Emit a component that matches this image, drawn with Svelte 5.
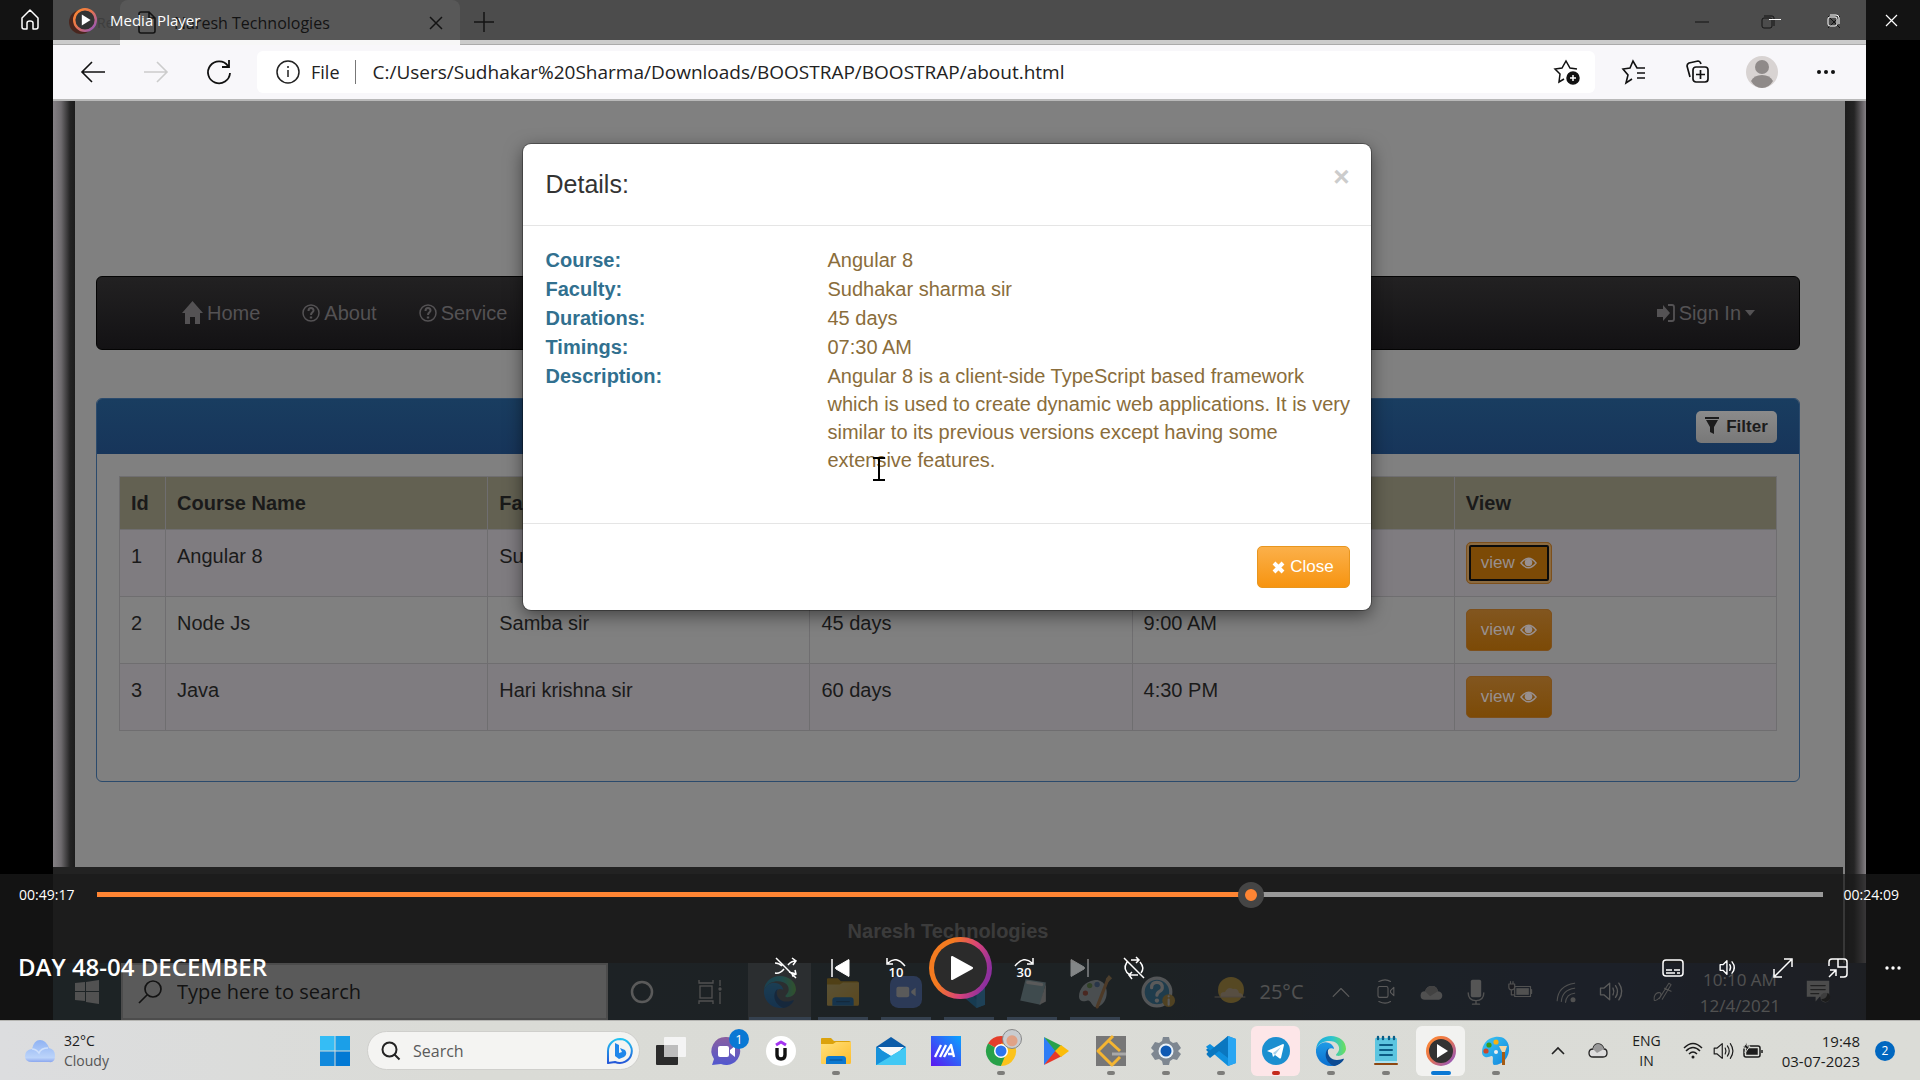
<script>
  const courses = [
    { id: 1, name: 'Angular 8', faculty: 'Sudhakar sharma sir', duration: '45 days', time: '7:30 AM' },
    { id: 2, name: 'Node Js', faculty: 'Samba sir', duration: '45 days', time: '9:00 AM' },
    { id: 3, name: 'Java', faculty: 'Hari krishna sir', duration: '60 days', time: '4:30 PM' }
  ];
  const details = [
    ['Course:', 'Angular 8'],
    ['Faculty:', 'Sudhakar sharma sir'],
    ['Durations:', '45 days'],
    ['Timings:', '07:30 AM'],
    ['Description:', 'Angular 8 is a client-side TypeScript based framework which is used to create dynamic web applications. It is very similar to its previous versions except having some extensive features.']
  ];
  const total = 4406;
  let position = $state(2957);
  // The thumb is 26px wide, so its centre never reaches the ends of the track.
  const played = $derived(`calc(13px + (100% - 26px) * ${position / total})`);

  const videoApps = ['edge', 'explorer', 'zoom', 'vscode', 'notes', 'paint'];
  const videoTray = ['chevron', 'meet', 'cloudFlat', 'mic', 'plug', 'wifiThin', 'volume'];
  const apps = [
    { icon: 'taskview', label: 'Task view' },
    { icon: 'chat', label: 'Chat', badge: 1 },
    { icon: 'udemy', label: 'Udemy' },
    { icon: 'explorer', label: 'File Explorer', open: true },
    { icon: 'mail', label: 'Mail' },
    { icon: 'asus', label: 'MyASUS' },
    { icon: 'chrome', label: 'Chrome', open: true },
    { icon: 'play', label: 'Google Play' },
    { icon: 'leet', label: 'LeetCode', open: true },
    { icon: 'gear', label: 'Settings', open: true },
    { icon: 'vscode', label: 'Visual Studio Code', open: true },
    { icon: 'telegram', label: 'Telegram', open: true, alert: true },
    { icon: 'edge', label: 'Edge', open: true },
    { icon: 'notepad', label: 'Notepad', open: true },
    { icon: 'media', label: 'Media Player', active: true },
    { icon: 'paint11', label: 'Paint', open: true }
  ];
</script>

{#snippet icon(name, size = 30)}
  <svg class="icon" width={size} height={size} viewBox="0 0 30 30" fill="none" stroke-linecap="round" stroke-linejoin="round" aria-hidden="true">
    {#if name === 'edge'}
      <path d="M15 0C7 0 1 5 0 13c3-6 8-8 13-8 8 0 11 5 10 9-1 3-3 4-3 5 1 2 9 1 10-6C30 5 23 0 15 0z" fill="url(#g-edge-top)" />
      <path d="M0 13c3-6 8-8 13-6 3 1 5 4 5 6-3-2-7 0-7 4 0 5 5 9 11 8 3 0 5-1 5-1-3 4-7 6-12 6C6 30-1 22 0 13z" fill="url(#g-edge-blue)" />
      <path d="M13 12c-5 3-5 14 5 18 4-.5 8-3 10-7-1-1-3 1-7 1-6 0-10-5-9-10z" fill="#0d4b93" />
    {:else if name === 'explorer'}
      <path d="M0 3q0-1 1-1h9l3 3h15q2 0 2 2v4H0z" fill="#dba20c" />
      <path d="M0 8h12l3-2h15v20q0 2-1 2H1q-1 0-1-1z" fill="url(#g-folder)" />
      <path d="M5 28v-5q0-3 3-3h14q3 0 3 3v5z" fill="#0b78d0" />
      <path d="M9 24h12" stroke="#064f91" stroke-width="1" />
    {:else if name === 'zoom'}
      <rect width="30" height="30" rx="8" fill="#5b8df5" />
      <rect x="6" y="10" width="12" height="10" rx="2" fill="#fff" /><path d="M20 14l4-3v8l-4-3z" fill="#fff" />
    {:else if name === 'vscode'}
      <path d="M22 0L5 18l-4-3c-1-1-1-2 0-2l3-2 18 14z" fill="#0a77c0" />
      <path d="M22 0l8 3v24l-8 3L1 12c-1-1-1-2 0-2l3-2 18 14z" fill="#0f8fdd" />
      <path d="M1 19l3 3L22 8V0L1 17q-1 1 0 2z" fill="#0a77c0" />
      <path d="M22 0l8 3v24l-8 3z" fill="#2aa6f2" />
    {:else if name === 'notes'}
      <path d="M9 3l19 3-5 21-19-4z" fill="#9fc8d4" /><path d="M22 27l6-20v17z" fill="#ddd" /><path d="M11 6l13 2" stroke="#fff" stroke-width="3" />
    {:else if name === 'paint'}
      <path d="M14 4C6 5 0 12 0 19c0 6 6 5 8 4 3-1 4 5 7 6 9 0 13-11 10-19-2-5-7-7-11-6z" fill="#c6d5dc" />
      <circle cx="6" cy="16" r="2.5" fill="#c04a32" /><circle cx="10" cy="9" r="2.5" fill="#6ca84a" /><circle cx="17" cy="8" r="2.5" fill="#4f7dc0" />
      <path d="M17 29L27 3" stroke="#d08c4a" stroke-width="3" /><path d="M25 3l3-4 3 3-4 4z" fill="#c89b5c" />
    {:else if name === 'help'}
      <circle cx="14" cy="15" r="13" fill="#2e93cc" stroke="#e6eef2" stroke-width="3" />
      <path d="M9 11q0-5 5-5 5 0 5 5c0 4-5 3-5 7" stroke="#fff" stroke-width="3" /><circle cx="14" cy="23" r="2" fill="#fff" />
      <circle cx="25" cy="23" r="6" fill="#dba836" /><path d="M25 22v5M25 19v.1" stroke="#fff" stroke-width="2" />
    {:else if name === 'sun'}
      <circle cx="16" cy="13" r="13" fill="#f0bd3b" /><path d="M6 20q-2-5 4-5 3-6 8-3 5-1 6 4 4 0 4 4z" fill="#f2d3a8" /><path d="M0 20h30" stroke="#d2bba0" stroke-width="1" />
    {:else if name === 'chevron'}
      <path d="M6 20l9-9 9 9" stroke="#fff" stroke-width="1.4" />
    {:else if name === 'meet'}
      <path d="M7 3q8-4 14 0M7 27q8 4 14 0" stroke="#fff" stroke-width="1.3" /><rect x="6" y="9" width="12" height="13" rx="2" stroke="#fff" stroke-width="1.3" /><path d="M21 14l4-4v10l-4-4z" stroke="#fff" stroke-width="1.3" />
    {:else if name === 'cloudFlat'}
      <path d="M8 24q-5 0-5-5t5-5q2-6 8-6t7 6q5 1 5 5t-4 5z" fill="#dcdcdc" /><path d="M8 14q2-6 8-6t7 6l-9 6z" fill="#a8a8a8" />
    {:else if name === 'mic'}
      <rect x="9" y="1" width="12" height="20" rx="2" fill="#eee" /><path d="M6 16q0 9 9 9t9-9M15 25v4M11 29h8" stroke="#ddd" stroke-width="1.6" />
    {:else if name === 'plug'}
      <rect x="8" y="9" width="19" height="12" stroke="#ddd" stroke-width="1.4" /><rect x="10" y="11" width="15" height="8" fill="#ddd" /><path d="M28 13v4" stroke="#ddd" stroke-width="2" /><path d="M1 6h7v4q0 3-4 3-3 0-3-3zM3 6V3M6 6V3M4 13v6h4" stroke="#ddd" stroke-width="1.4" fill="#223" />
    {:else if name === 'wifiThin'}
      <path d="M5 26Q6 8 26 5M10 27Q11 13 26 11M15 28q1-10 11-11" stroke="#ddd" stroke-width="1.3" /><circle cx="24" cy="25" r="3" fill="#ddd" />
    {:else if name === 'volume' || name === 'volumeDark'}
      <g stroke={name === 'volume' ? '#fff' : '#1c1c1c'} stroke-width="1.6"><path d="M3 11h4l7-6v20l-7-6H3z" /><path d="M18 11q2 4 0 8M21 8q5 7 0 14M25 5q7 10 0 20" /></g>
    {:else if name === 'speaker'}
      <g stroke="#fff" stroke-width="2.4"><path d="M2 10h5l7-7v24l-7-7H2z" /><path d="M19 10q3 5 0 10M23 5q8 10 0 20" /></g>
    {:else if name === 'pen'}
      <path d="M3 22q2-7 8-6 3 3-1 7-5 5-7 3zM10 24L23 3l3 2-12 20M17 10l9 4" stroke="#ddd" stroke-width="1.4" />
    {:else if name === 'notice'}
      <path d="M1 1h28v20H17l-5 6v-6H1z" fill="#ccc" /><path d="M6 7h18M6 12h18M6 17h10" stroke="#333" stroke-width="1.5" /><circle cx="24" cy="22" r="6" fill="#999" /><path d="M27 16a6 6 0 1 1-8 8q7 0 8-8" fill="#222" />
    {:else if name === 'taskview'}
      <rect x="0" y="9" width="22" height="20" rx="1" fill="#2b2b2b" /><rect x="8" y="1" width="22" height="20" rx="1" fill="#f4f4f4" /><rect x="8" y="9" width="14" height="12" fill="#bdbdbd" />
    {:else if name === 'chat'}
      <path d="M15 1a14 14 0 1 1-5 27l-9 1 2-6A14 14 0 0 1 15 1z" fill="url(#g-chat)" /><rect x="7" y="10" width="11" height="11" rx="2" fill="#fff" /><path d="M19 14l5-4v11l-5-4z" fill="#fff" />
    {:else if name === 'udemy'}
      <circle cx="15" cy="15" r="15" fill="#fff" /><path d="M10 9l5-3 5 3" stroke="#a435f0" stroke-width="3" stroke-linecap="butt" /><path d="M11 12v7q0 4 4 4t4-4v-7" stroke="#111" stroke-width="3.4" stroke-linecap="butt" />
    {:else if name === 'mail'}
      <path d="M0 11L15 1l15 10v3H0z" fill="#0a5ba8" /><path d="M2 11h26L15 22z" fill="#f5f8fa" /><path d="M0 11l15 9 15-9v18H0z" fill="#27b1ea" /><path d="M30 11L0 29h30z" fill="#42c8f4" /><path d="M0 11v18l15-9z" fill="#1691da" /><path d="M3 11h24L15 19z" fill="#f5f8fa" />
    {:else if name === 'asus'}
      <rect width="30" height="30" fill="url(#g-asus)" /><path d="M4 21L10 9M9 21l6-12M13 21l7-12 3 12M17 18h5" stroke="#fff" stroke-width="2.4" stroke-linecap="butt" />
    {:else if name === 'chrome'}
      <path d="M15 15L2 7.5A15 15 0 0 1 28 7.5z" fill="#e43e2b" /><path d="M15 15L2 7.5A15 15 0 0 0 15 30l7-11z" fill="#27a148" /><path d="M15 15h6l-6 15A15 15 0 0 0 28 7.5H15z" fill="#fcc31c" /><circle cx="15" cy="15" r="7" fill="#fff" /><circle cx="15" cy="15" r="5.5" fill="#2d75ee" />
    {:else if name === 'play'}
      <path d="M3 1l13 14L3 29z" fill="#2e7df6" /><path d="M3 1l18 9-6 6z" fill="#27a14b" /><path d="M3 29l18-9-6-6z" fill="#e8372a" /><path d="M20 9l8 6-8 6-6-6z" fill="#fbbc0a" />
    {:else if name === 'leet'}
      <rect width="30" height="30" fill="#777" /><path d="M17 0L2 15l14 14 8-8M13 5l11 10" stroke="#f4b532" stroke-width="3" stroke-linecap="butt" /><path d="M16 18h14" stroke="#a9a9a9" stroke-width="3" stroke-linecap="butt" />
    {:else if name === 'gear'}
      <path d="M12 1h6l1 4 3 2 4-1 4 6-3 3 3 3-4 6-4-1-3 2-1 4h-6l-1-4-3-2-4 1-4-6 3-3-3-3 4-6 4 1 3-2z" fill="#7e8791" /><circle cx="15" cy="15" r="7.5" fill="#e9f1f8" /><circle cx="15" cy="15" r="5.5" fill="#0e59b3" />
    {:else if name === 'telegram'}
      <circle cx="15" cy="15" r="14" fill="#1c8fd0" /><path d="M6 15l16-7q1 0 1 1l-3 13q-1 1-2 0l-4-3-2 2-1-4z" fill="#fff" /><path d="M12 17l8-6-6 8" fill="#a9d2ea" />
    {:else if name === 'notepad'}
      <rect x="4" y="2" width="22" height="25" rx="1" fill="#5cc5e0" /><path d="M9 9h12M9 14h12M9 19h12" stroke="#0b5d86" stroke-width="2" /><path d="M4 28h22" stroke="#8d4711" stroke-width="2" /><path d="M4 26h22" stroke="#fff" stroke-width="1" /><path d="M7 1v2M12 1v2M18 1v2M23 1v2" stroke="#0b5d86" stroke-width="2.4" />
    {:else if name === 'media'}
      <circle cx="15" cy="15" r="13.5" fill="#333" stroke="url(#g-ring)" stroke-width="3" /><path d="M11 8l11 7-11 7z" fill="#fff" />
    {:else if name === 'paint11'}
      <path d="M14 1C6 2 1 9 1 16c0 6 6 6 9 4 4-1 0 7 3 9 9 0 16-8 15-18C27 3 21 0 14 1z" fill="url(#g-palette)" /><circle cx="5" cy="15" r="2.6" fill="#c9482a" /><circle cx="8" cy="9" r="2.6" fill="#379b1c" /><circle cx="15" cy="6" r="2.6" fill="#f6b211" /><circle cx="15" cy="16" r="2" fill="#eee" />
      <path d="M18 10h8l-2 6h-3z" fill="#f3d7a8" /><path d="M22.5 16v13" stroke="#a55b14" stroke-width="3" stroke-linecap="butt" />
    {/if}
  </svg>
{/snippet}

{#snippet eye()}
  <svg class="eye" viewBox="0 0 18 12" aria-hidden="true"><path d="M1 6q8-10 16 0-8 10-16 0z" fill="none" stroke="currentColor" stroke-width="1.5" /><circle cx="9" cy="5.5" r="4" fill="currentColor" /></svg>
{/snippet}

{#snippet question()}
  <svg width="18" height="18" viewBox="0 0 18 18" fill="none" stroke="currentColor" aria-hidden="true"><circle cx="9" cy="9" r="8" stroke-width="1.5" /><path d="M6.5 7q0-3 2.5-3t2.5 2.5C11.5 8.5 9 8 9 11" stroke-width="2" /><path d="M9 12.5v2" stroke-width="2.4" /></svg>
{/snippet}

<svg class="defs" width="0" height="0" aria-hidden="true">
  <defs>
    <linearGradient id="g-edge-top"><stop offset="0" stop-color="#19a7e0" /><stop offset=".55" stop-color="#2ec4cd" /><stop offset="1" stop-color="#6ee05a" /></linearGradient>
    <linearGradient id="g-edge-blue" x1="0" y1="0" x2="0" y2="1"><stop offset="0" stop-color="#1f9be6" /><stop offset="1" stop-color="#0a6fd0" /></linearGradient>
    <linearGradient id="g-folder" x1="0" y1="0" x2="1" y2="1"><stop offset="0" stop-color="#ffe07a" /><stop offset="1" stop-color="#fdbd2c" /></linearGradient>
    <linearGradient id="g-chat" x1="0" y1="0" x2="0" y2="1"><stop offset="0" stop-color="#8a5fa0" /><stop offset="1" stop-color="#5157cf" /></linearGradient>
    <linearGradient id="g-asus" x1="0" y1="1" x2="1" y2="0"><stop offset="0" stop-color="#5b16f0" /><stop offset="1" stop-color="#0aa4ff" /></linearGradient>
    <linearGradient id="g-ring" x1="0" y1="0" x2="1" y2="1"><stop offset="0" stop-color="#ff8a30" /><stop offset=".45" stop-color="#e8744e" /><stop offset="1" stop-color="#8b52c8" /></linearGradient>
    <linearGradient id="g-palette" x1="0" y1="0" x2="1" y2="1"><stop offset="0" stop-color="#3bc8f5" /><stop offset="1" stop-color="#1384dc" /></linearGradient>
    <linearGradient id="g-bing" x1="0" y1="0" x2="0" y2="1"><stop offset="0" stop-color="#22c4f2" /><stop offset="1" stop-color="#2456d8" /></linearGradient>
    <linearGradient id="g-cloud" x1="0" y1="0" x2="0" y2="1"><stop offset="0" stop-color="#8fb2f3" /><stop offset=".8" stop-color="#bcd4fa" /><stop offset="1" stop-color="#8aa6ee" /></linearGradient>
  </defs>
</svg>

<div class="desktop">
  <main class="stage">
    <div class="video">
      <div class="tabstrip">
        <div class="oldtab"><span class="dot"></span>Re</div>
        <div class="tab">
          <svg width="20" height="24" viewBox="0 0 20 24" fill="none" stroke="#000" stroke-width="1.6"><path d="M4 1h8l6 6v13q0 2-2 2H4q-2 0-2-2V3q0-2 2-2zM12 1v6h6" /></svg>
          <span>Naresh Technologies</span>
          <svg class="tabclose" width="14" height="14" viewBox="0 0 14 14" stroke="#000" stroke-width="1.5"><path d="M1 1l12 12M13 1L1 13" /></svg>
        </div>
        <svg class="plus" width="20" height="20" viewBox="0 0 20 20" stroke="#000" stroke-width="1.5"><path d="M10 0v20M0 10h20" /></svg>
        <div class="oldwin">
          <svg width="14" height="14" viewBox="0 0 14 14" stroke="#000"><path d="M0 7h14" /></svg>
          <svg width="14" height="14" viewBox="0 0 14 14" fill="none" stroke="#000"><rect x="1" y="3" width="10" height="10" rx="2" /><path d="M3 1h8q2 0 2 2v8" /></svg>
          <svg width="14" height="14" viewBox="0 0 14 14" stroke="#000"><path d="M1 1l12 12M13 1L1 13" /></svg>
        </div>
      </div>

      <div class="toolbar">
        <button aria-label="Back"><svg width="24" height="20" viewBox="0 0 24 20" fill="none" stroke="#111" stroke-width="1.6"><path d="M24 10H1M11 0L1 10l10 10" /></svg></button>
        <button aria-label="Forward"><svg width="24" height="20" viewBox="0 0 24 20" fill="none" stroke="#ccc" stroke-width="1.6"><path d="M0 10h23M13 0l10 10-10 10" /></svg></button>
        <button aria-label="Reload"><svg width="24" height="24" viewBox="0 0 24 24" fill="none" stroke="#111" stroke-width="1.8"><path d="M21 6a11 11 0 1 0 2 7M22 0v7h-7" /></svg></button>
        <div class="address">
          <svg width="24" height="24" viewBox="0 0 24 24" fill="none" stroke="#222" stroke-width="1.5"><circle cx="12" cy="12" r="11" /><path d="M12 10v7M12 6v2" /></svg>
          <span class="scheme">File</span>
          <input aria-label="Address" value="C:/Users/Sudhakar%20Sharma/Downloads/BOOSTRAP/BOOSTRAP/about.html" />
          <button aria-label="Add to favourites"><svg width="26" height="26" viewBox="0 0 26 26" fill="none" stroke="#111" stroke-width="1.5"><path d="M9 20l-5 3 1-8-5-5 7-1 4-7 4 7 7 1" /><circle cx="18" cy="19" r="6" fill="#111" /><path d="M18 16v6M15 19h6" stroke="#fff" /></svg></button>
        </div>
        <div class="actions">
          <button aria-label="Favourites"><svg width="26" height="26" viewBox="0 0 26 26" fill="none" stroke="#111" stroke-width="1.6"><path d="M11 20l-6 4 2-8-5-6 7-1 3-7 4 7h8M16 14h8M16 19h8" /></svg></button>
          <button aria-label="Collections"><svg width="26" height="26" viewBox="0 0 26 26" fill="none" stroke="#111" stroke-width="1.7"><path d="M5 18L2 7q0-2 2-3l9-2q2 0 3 3" /><rect x="8" y="8" width="15" height="15" rx="3" /><path d="M15.5 11v9M11 15.5h9" /></svg></button>
          <button aria-label="Profile"><svg width="32" height="32" viewBox="0 0 32 32"><circle cx="16" cy="16" r="16" fill="#d8d3d2" /><circle cx="16" cy="11" r="7" fill="#8f8a89" /><path d="M5 25q3-6 11-6t11 6q-4 7-11 7T5 25" fill="#8f8a89" /></svg></button>
          <button aria-label="Settings and more"><svg width="20" height="6" viewBox="0 0 20 6" fill="#111"><circle cx="3" cy="3" r="2" /><circle cx="10" cy="3" r="2" /><circle cx="17" cy="3" r="2" /></svg></button>
        </div>
      </div>

      <div class="page">
        <div class="sheet">
          <nav class="navbar">
            <a href="#home"><svg width="21" height="25" viewBox="0 0 21 25" fill="currentColor" aria-hidden="true"><path d="M10.5 0L21 12h-3v11h-5v-7H8v7H3V12H0z" /></svg>Home</a>
            <a href="#about">{@render question()}About</a>
            <a href="#service">{@render question()}Service</a>
            <a class="signin" href="#signin"><svg width="18" height="18" viewBox="0 0 18 18" fill="currentColor" aria-hidden="true"><path d="M0 5h6V1l7 8-7 8v-4H0z" /><path d="M11 1h4q2 0 2 2v12q0 2-2 2h-4" fill="none" stroke="currentColor" stroke-width="1.8" /></svg><span>Sign In</span><span class="caret"></span></a>
          </nav>

          <section class="panel">
            <div class="panelhead">
              <button class="filter"><svg width="14" height="20" viewBox="0 0 14 20" fill="currentColor" aria-hidden="true"><path d="M0 0h14v2H0zM1 3h12L9 10v7l-4-2v-5z" /></svg>Filter</button>
            </div>
            <table>
              <thead><tr><th class="num">Id</th><th>Course Name</th><th>Faculty</th><th>Duration</th><th>Timings</th><th>View</th></tr></thead>
              <tbody>
                {#each courses as c (c.id)}
                  <tr>
                    <td>{c.id}</td><td>{c.name}</td><td>{c.faculty}</td><td>{c.duration}</td><td>{c.time}</td>
                    <td><button class="view" class:focused={c.id === 1}>view {@render eye()}</button></td>
                  </tr>
                {/each}
              </tbody>
            </table>
          </section>
          <footer>Naresh Technologies</footer>
        </div>

        <div class="modal-layer">
          <div class="modal" role="dialog" aria-labelledby="modal-title">
            <header>
              <h2 id="modal-title">Details:</h2>
              <button class="dismiss" aria-label="Dismiss">×</button>
            </header>
            <dl>
              {#each details as [term, value] (term)}
                <dt>{term}</dt><dd>{value}</dd>
              {/each}
            </dl>
            <div class="modalfoot"><button class="close"><svg width="13" height="13" viewBox="0 0 13 13" stroke="#fff" stroke-width="4" aria-hidden="true"><path d="M2 2l9 9M11 2l-9 9" /></svg>Close</button></div>
            <svg class="ibeam" width="14" height="24" viewBox="0 0 14 24" fill="none" stroke="#000" stroke-width="2" aria-hidden="true"><path d="M1 1h12M7 1v22M1 23h12" /></svg>
          </div>
        </div>
      </div>

      <div class="oldbar">
        <div class="oldstart"><svg width="24" height="24" viewBox="0 0 24 24" fill="#ddd"><path d="M0 3l10-1v9H0zM11 2l13-2v11H11zM0 12h10v9L0 20zM11 12h13v12l-13-2z" /></svg></div>
        <div class="oldsearch">
          <svg width="24" height="24" viewBox="0 0 24 24" fill="none" stroke="#000" stroke-width="1.7"><circle cx="15" cy="9" r="8" /><path d="M9 15l-8 8" /></svg>
          <input aria-label="Windows search" placeholder="Type here to search" />
        </div>
        <div class="oldcell wide"><svg width="26" height="26" viewBox="0 0 26 26" fill="none" stroke="#fff" stroke-width="2.5"><circle cx="13" cy="13" r="10" /></svg></div>
        <div class="oldcell tasks"><svg width="24" height="24" viewBox="0 0 24 24" fill="none" stroke="#ddd" stroke-width="1.3"><path d="M1 0v3h14V0M1 24v-3h14v3M22 0v6M22 12v12" /><rect x="2" y="6" width="12" height="12" /><circle cx="22" cy="9" r="1" /></svg></div>
        {#each videoApps as a, i (a)}
          <div class="oldcell running" class:current={i === 0}>{@render icon(a, 32)}</div>
        {/each}
        <div class="oldcell">{@render icon('help', 32)}</div>
        <div class="oldweather">{@render icon('sun', 30)}<span>25°C</span></div>
        {#each videoTray as t (t)}
          <div class="oldtray">{@render icon(t, t === 'mic' || t === 'chevron' || t === 'cloudFlat' ? 26 : 25)}</div>
        {/each}
        <div class="oldpen">{@render icon('pen', 22)}</div>
        <div class="oldclock"><span>10:10 AM</span><span>12/4/2021</span></div>
        <div class="oldnotice">{@render icon('notice', 24)}</div>
      </div>
    </div>

    <div class="titlebar">
      <button class="homebtn" aria-label="Home"><svg width="20" height="22" viewBox="0 0 20 22" fill="none" stroke="#fff" stroke-width="1.5" stroke-linejoin="round"><path d="M2 9l8-8 8 8v9q0 2-2 2h-3v-6q0-2-3-2t-3 2v6H4q-2 0-2-2z" /></svg></button>
      <span class="app">{@render icon('media', 24)}Media Player</span>
      <div class="winbtns">
        <button aria-label="Minimise"><svg width="12" height="12" viewBox="0 0 12 12" stroke="#fff"><path d="M0 5.5h12" /></svg></button>
        <button aria-label="Restore"><svg width="13" height="13" viewBox="0 0 13 13" fill="none" stroke="#fff"><rect x="1" y="3" width="9" height="9" rx="2" /><path d="M3 1h6q3 0 3 3v6" /></svg></button>
        <button aria-label="Close window"><svg width="13" height="13" viewBox="0 0 13 13" stroke="#fff" stroke-width="1.2"><path d="M1 1l11 11M12 1L1 12" /></svg></button>
      </div>
    </div>

    <div class="player">
      <div class="seek">
        <span>00:49:17</span>
        <input type="range" aria-label="Seek" min="0" max={total} bind:value={position} style:--played={played} />
        <span class="remain">00:24:09</span>
      </div>
      <div class="controls">
        <div class="title">DAY 48-04 DECEMBER</div>
        <div class="transport">
          <button aria-label="Shuffle off"><svg width="22" height="22" viewBox="0 0 22 22" fill="none" stroke="#fff" stroke-width="1.5"><path d="M1 1l20 20M0 16q5 1 9-4M13 8q3-4 8-4M17 1l4 3-3 4M0 6q4 0 7 3M14 15l7 2M20 13l1 4-4 2" /></svg></button>
          <button aria-label="Previous"><svg width="20" height="20" viewBox="0 0 20 20"><path d="M1 1v18" stroke="#fff" stroke-width="1.5" /><path d="M17 2q1-1 1 0v16q0 1-1 0L5 11q-1-1 0-2z" fill="#fff" stroke="#fff" /></svg></button>
          <button class="jump" aria-label="Back 10 seconds"><svg width="20" height="9" viewBox="0 0 20 9" fill="none" stroke="#fff" stroke-width="1.5"><path d="M1 0v6h6M2 5q8-8 17 3" /></svg><span>10</span></button>
          <button class="playbtn" aria-label="Play"><svg width="24" height="26" viewBox="0 0 24 26" fill="#fff" stroke="#fff" stroke-width="2" stroke-linejoin="round"><path d="M2 2l20 11L2 24z" /></svg></button>
          <button class="jump" aria-label="Forward 30 seconds"><svg width="20" height="9" viewBox="0 0 20 9" fill="none" stroke="#fff" stroke-width="1.5"><path d="M19 0v6h-6M18 5Q10-3 1 8" /></svg><span>30</span></button>
          <button class="dim" aria-label="Next"><svg width="20" height="20" viewBox="0 0 20 20"><path d="M19 1v18" stroke="#fff" stroke-width="1.5" /><path d="M3 2q-1-1-1 0v16q0 1 1 0l12-7q1-1 0-2z" fill="#fff" stroke="#fff" /></svg></button>
          <button aria-label="Repeat off"><svg width="22" height="22" viewBox="0 0 22 22" fill="none" stroke="#fff" stroke-width="1.5"><path d="M1 1l20 20M8 3h8M13 0l3 3-3 3M17 5q5 6 1 11M4 5q-5 8 3 13h8M9 15l-3 3 3 4" /></svg></button>
        </div>
        <div class="extras">
          <button aria-label="Subtitles"><svg width="22" height="18" viewBox="0 0 22 18" fill="none" stroke="#fff" stroke-width="1.5"><rect x="1" y="1" width="20" height="16" rx="3" /><path d="M4 11h6M12 11h6M4 14h9M15 14h3" /></svg></button>
          <button aria-label="Volume">{@render icon('speaker', 17)}</button>
          <button aria-label="Full screen"><svg width="20" height="20" viewBox="0 0 20 20" fill="none" stroke="#fff" stroke-width="1.5"><path d="M2 18L18 2M11 1h8v8M1 11v8h8" /></svg></button>
          <button aria-label="Mini player"><svg width="20" height="20" viewBox="0 0 20 20" fill="none" stroke="#fff" stroke-width="1.5"><path d="M1 8V4q0-3 3-3h12q3 0 3 3v12q0 3-3 3h-4M10 1v8h9M1 19l7-7M2 12h6v6" /></svg></button>
          <button aria-label="More"><svg width="18" height="6" viewBox="0 0 18 6" fill="#fff"><circle cx="3" cy="3" r="1.7" /><circle cx="9" cy="3" r="1.7" /><circle cx="15" cy="3" r="1.7" /></svg></button>
        </div>
      </div>
    </div>
  </main>

  <div class="taskbar">
    <button class="weather">
      <svg width="32" height="24" viewBox="0 0 32 24" aria-hidden="true"><path d="M8 23q-7 0-7-6t7-7q2-9 8-9t9 8q6 1 6 8t-6 6z" fill="url(#g-cloud)" /><path d="M8 10q4 0 7 4 2-5 9-5" fill="none" stroke="#cfe0fb" stroke-width="1.5" /></svg>
      <span>32°C<small>Cloudy</small></span>
    </button>
    <button class="start" aria-label="Start"><svg width="30" height="30" viewBox="0 0 30 30"><rect width="14.5" height="14.5" fill="#35bdf5" /><rect x="15.5" width="14.5" height="14.5" fill="#1b9fe8" /><rect y="15.5" width="14.5" height="14.5" fill="#1189dc" /><rect x="15.5" y="15.5" width="14.5" height="14.5" fill="#0279d4" /></svg></button>
    <label class="search">
      <svg width="20" height="20" viewBox="0 0 20 20" fill="none" stroke="#222" stroke-width="2"><circle cx="8.5" cy="8.5" r="7" /><path d="M13.5 13.5l5 5" /></svg>
      <input aria-label="Search" placeholder="Search" />
      <svg width="26" height="26" viewBox="0 0 26 26" fill="none" stroke="url(#g-bing)" stroke-width="2" stroke-linejoin="round"><path d="M13 1a12 12 0 1 1-5 23l-7 1V13A12 12 0 0 1 13 1z" /><path d="M8 5l4 2v8l3-1-2-4 5 2q3 4-1 7l-5 2-4-3z" fill="#1f86ea" stroke="none" /></svg>
    </label>
    {#each apps as a (a.icon)}
      <button class="app11" class:active={a.active} class:alert={a.alert} class:open={a.open} aria-label={a.label}>
        {@render icon(a.icon, 30)}
        {#if a.badge}<span class="count">{a.badge}</span>{/if}
        {#if a.icon === 'chrome'}<span class="face"></span>{/if}
      </button>
    {/each}
    <div class="tray">
      <button class="slot" aria-label="Hidden icons"><svg width="14" height="10" viewBox="0 0 14 10" fill="none" stroke="#222" stroke-width="1.6"><path d="M1 8l6-6 6 6" /></svg></button>
      <button class="slot" aria-label="OneDrive"><svg width="20" height="16" viewBox="0 0 20 16" fill="#ddd" stroke="#222" stroke-width="1.3"><path d="M5 14q-4 0-4-4t4-4q1-5 5-5t6 5q3 0 3 4t-4 4z" /><path d="M5 6q1-5 5-5t6 5l-7 4z" fill="#999" stroke="none" /></svg></button>
      <button class="lang"><span>ENG</span><span>IN</span></button>
      <button class="mini" aria-label="Network"><svg width="20" height="17" viewBox="0 0 20 17" fill="none" stroke="#1c1c1c" stroke-width="1.5"><path d="M1 6q9-9 18 0M3 9q7-7 14 0M6 12q4-4 8 0" /><circle cx="10" cy="15" r="1.5" fill="#1c1c1c" stroke="none" /></svg></button>
      <button class="mini" aria-label="Sound">{@render icon('volumeDark', 22)}</button>
      <button class="mini" aria-label="Battery"><svg width="20" height="17" viewBox="0 0 20 17" fill="none" stroke="#1c1c1c" stroke-width="1.5"><rect x="1" y="4" width="16" height="11" rx="2" /><rect x="4" y="7" width="10" height="5" fill="#1c1c1c" /><path d="M19 8v3" /><path d="M4 0L0 6h3l-1 5 5-7H4z" fill="#1c1c1c" stroke="#dcddd8" stroke-width="1" /></svg></button>
      <button class="clock"><span>19:48</span><span>03-07-2023</span></button>
      <button class="alerts" aria-label="2 notifications">2</button>
    </div>
  </div>
</div>

<style>
  :global(body) { background: #000; }
  * { box-sizing: border-box; }
  button { border: 0; padding: 0; background: none; font: inherit; color: inherit; display: flex; align-items: center; justify-content: center; }
  input { border: 0; padding: 0; background: none; font: inherit; color: inherit; min-width: 0; outline: 0; }
  svg { display: block; flex: none; overflow: visible; }
  .defs { position: absolute; }
  .desktop { min-height: 100vh; display: flex; flex-direction: column; font-family: 'Open Sans', 'Noto Sans', sans-serif; }
  .stage { position: relative; flex: 1; display: flex; background: #000; }
  .video { flex: 1; margin: 0 54px 0 53px; display: flex; flex-direction: column; min-width: 0; }

  /* recorded browser */
  .tabstrip { height: 45px; display: flex; background: #cbcbcb; border-bottom: 1px solid #aaa; }
  .oldtab { width: 67px; display: flex; align-items: center; gap: 4px; padding-left: 16px; font-size: 14px; color: #999; }
  .dot { width: 24px; height: 24px; border-radius: 12px; background: #c2452a; flex: none; }
  .tab { width: 340px; height: 45px; display: flex; align-items: center; padding: 0 17px; gap: 17px; background: #f7f7f7; border-radius: 8px 8px 0 0; font-size: 16px; color: #000; }
  .tabclose { margin-left: auto; }
  .plus { margin: 12px 14px; }
  .oldwin { margin-left: auto; display: flex; align-items: center; gap: 52px; padding-right: 25px; }
  .toolbar { height: 56px; display: flex; align-items: center; background: #f8f7fa; border-bottom: 2px solid #b9b9b9; padding: 0 8px; }
  .toolbar > button { width: 63px; height: 42px; }
  .address { flex: 1; height: 42px; margin-left: 7px; display: flex; align-items: center; background: #fff; border-radius: 6px; padding: 0 14px 0 19px; font-size: 19px; color: #222; min-width: 0; }
  .scheme { padding: 0 15px 0 11px; margin-right: 17px; border-right: 1px solid #777; font-size: 18px; }
  .address input { flex: 1; }
  .actions { display: flex; padding-left: 7px; }
  .actions button { width: 64px; height: 42px; }

  /* recorded web page */
  .page { position: relative; flex: 1; padding: 0 21px 0 22px; background: linear-gradient(90deg, #848084 0, #6e6b6e 8px, #242424 17px, #1c1c1c 22px, transparent 22px), linear-gradient(270deg, #848084 0, #5b585b 5px, #242424 12px, #1c1c1c 21px, transparent 21px), #808080; font-family: 'Liberation Sans', Arial, sans-serif; font-size: 20px; line-height: 28px; color: #1a1a1a; }
  .sheet { padding-top: 175px; display: flex; flex-direction: column; }
  .navbar { height: 74px; margin: 0 45px 0 21px; padding: 0 23px 0 64px; display: flex; align-items: center; border: 1px solid #040404; border-radius: 6px; background: linear-gradient(#222122, #131214); }
  .navbar a { display: flex; align-items: center; gap: 4px; padding: 0 21px; color: #545254; text-decoration: none; }
  .navbar .signin { margin-left: auto; }
  .caret { border: 5px solid transparent; border-top: 6px solid #545254; border-bottom: 0; }
  .panel { margin: 48px 45px 0 21px; height: 384px; border: 1px solid #2b4a6c; border-radius: 6px; }
  .panelhead { height: 55px; display: flex; align-items: center; justify-content: flex-end; padding: 0 22px; border-radius: 5px 5px 0 0; background: linear-gradient(#193d60, #17355a); }
  .filter { width: 81px; height: 32px; gap: 7px; border-radius: 5px; background: linear-gradient(#8b8b8b, #787878); font-size: 17px; font-weight: 700; color: #1c1c1c; }
  table { width: calc(100% - 44px); margin: 22px 22px 0; border-collapse: collapse; table-layout: fixed; }
  th, td { border: 1px solid #6f6e70; padding: 12px 11px; text-align: left; vertical-align: top; white-space: nowrap; overflow: hidden; }
  th { background: #636152; }
  .num { width: 46px; }
  tbody tr:nth-child(odd) { background: #7f7c80; }
  .view { width: 86px; height: 42px; gap: 5px; border-radius: 5px; border: 1px solid #7d501c; background: linear-gradient(#82561f, #7c4a06); font-size: 17px; color: #989090; }
  .eye { width: 17px; height: 12px; }
  .view.focused { background: #7c4a06; outline: 2px solid #0b0b0b; outline-offset: -5px; box-shadow: inset 0 0 0 3px #8a6a40; }
  footer { margin: 85px 2px 0 -22px; height: 96px; display: flex; align-items: center; justify-content: center; padding-top: 32px; background: #222; font-weight: 700; color: #909090; }

  .modal-layer { position: absolute; inset: 43px 26px auto 0; display: flex; justify-content: center; }
  .modal { position: relative; width: 848px; background: #fff; border-radius: 8px; box-shadow: 0 5px 18px rgba(0, 0, 0, .5), 0 0 0 1px rgba(0, 0, 0, .3); }
  .modal header { height: 82px; display: flex; justify-content: space-between; padding: 23px 21px 0 23px; border-bottom: 1px solid #e5e5e5; }
  h2 { margin: 0; font-size: 25px; line-height: 34px; font-weight: 400; color: #333; }
  .dismiss { height: 20px; font-size: 28px; font-weight: 700; color: #ccc; }
  dl { margin: 0; padding: 20px 4px 49px 23px; display: grid; grid-template-columns: 282px 1fr; row-gap: 1px; }
  dt { font-weight: 700; color: #31708f; }
  dd { margin: 0; padding-right: 14px; color: #8a6d3b; }
  .modalfoot { padding: 22px 21px; display: flex; justify-content: flex-end; border-top: 1px solid #e5e5e5; }
  .close { width: 93px; height: 42px; gap: 5px; border-radius: 5px; border: 1px solid #e8961f; background: linear-gradient(#fbb04a, #f79410); color: #fff; font-size: 17px; }
  .ibeam { position: absolute; left: 349px; top: 313px; }

  /* recorded taskbar */
  .oldbar { height: 57px; display: flex; align-items: stretch; background: linear-gradient(90deg, #273a42 0, #26363e 60%, #20304d 85%, #262b3c); color: #ddd; }
  .oldbar > div { display: flex; align-items: center; justify-content: center; flex: none; }
  .oldbar .oldstart { width: 68px; }
  .oldbar .oldsearch { width: 487px; justify-content: flex-start; gap: 15px; padding-left: 15px; background: #fff; border: 2px solid #ccc; font-size: 20px; color: #000; }
  .oldsearch input { flex: 1; }
  .oldsearch input::placeholder { color: #000; opacity: 1; }
  .oldcell { width: 63px; }
  .oldbar .wide { width: 68px; }
  .oldbar .tasks { width: 68px; margin-right: 4px; }
  .running { background: linear-gradient(#7ba5d8, #7ba5d8) bottom / 50px 3px no-repeat; }
  .current { background: linear-gradient(#7ba5d8, #7ba5d8) bottom / 62px 3px no-repeat, #56606a; }
  .oldbar .oldweather { width: 129px; gap: 14px; padding-left: 12px; font-size: 20px; }
  .oldtray { width: 45px; }
  .oldpen { width: 60px; }
  .oldbar .oldclock { width: 94px; flex-direction: column; font-size: 17px; line-height: 26px; justify-content: flex-end; padding-bottom: 1px; white-space: nowrap; }
  .oldnotice { width: 62px; }

  /* player overlay */
  .titlebar { position: absolute; inset: 0 0 auto; height: 40px; display: flex; align-items: center; background: rgba(27, 27, 27, .72); color: #fff; font-size: 15px; }
  .homebtn { width: 60px; height: 40px; }
  .app { display: flex; align-items: center; gap: 13px; padding-left: 13px; }
  .winbtns { margin-left: auto; display: flex; }
  .winbtns button { width: 58px; height: 40px; }
  .player { position: absolute; inset: auto 0 0; height: 146px; background: rgba(27, 27, 27, .72); color: #fff; }
  .seek { height: 41px; display: flex; align-items: center; padding: 0 21px 0 19px; font-size: 14px; }
  .seek span { width: 78px; }
  .seek .remain { width: 76px; text-align: right; }
  .seek input { flex: 1; height: 26px; margin: 0; appearance: none; background: linear-gradient(#ff8533, #ff8533) left / var(--played) 5px no-repeat, linear-gradient(#999, #999) center / 100% 5px no-repeat; }
  .seek input::-webkit-slider-thumb { appearance: none; width: 26px; height: 26px; border-radius: 13px; border: 7px solid #454545; background: #ff8533; }
  .controls { height: 105px; display: grid; grid-template-columns: 1fr auto 1fr; align-items: center; }
  .title { padding: 0 0 2px 18px; font-size: 24px; line-height: 32px; font-weight: 600; }
  .transport { display: flex; align-items: center; }
  .transport button { width: 55px; height: 62px; }
  .transport .jump { flex-direction: column; }
  .jump span { font-size: 13px; line-height: 11px; font-weight: 600; }
  .transport .playbtn { width: 63px; margin: 0 5px; border-radius: 32px; border: 5px solid transparent; padding-left: 4px; background: linear-gradient(#2b2b2b, #2b2b2b) padding-box, linear-gradient(110deg, #f47b20 30%, #d8437a 60%, #8e2f9e 85%) border-box; }
  .dim { opacity: .45; }
  .extras { display: flex; justify-content: flex-end; }
  .extras button { width: 55px; height: 40px; }

  /* desktop taskbar */
  .taskbar { height: 60px; display: flex; align-items: center; background: linear-gradient(90deg, #dcdddf, #dadbd6 25%, #dbdcd7); border-top: 1px solid #b5b5b2; color: #1c1c1c; font-size: 14px; line-height: 20px; }
  .weather { width: 307px; justify-content: flex-start; gap: 8px; padding-left: 24px; text-align: left; }
  .weather small { display: block; font-size: 14px; color: #555; }
  .start { width: 55px; height: 50px; }
  .search { width: 273px; height: 39px; margin: 0 3px 0 5px; display: flex; align-items: center; gap: 12px; padding: 0 6px 0 13px; border-radius: 20px; background: #f4f4f2; border: 1px solid #cfcfcc; font-size: 16px; }
  .search input { flex: 1; }
  .search input::placeholder { color: #5a5a5a; opacity: 1; }
  .app11 { position: relative; width: 49px; height: 50px; margin: 0 3px; border-radius: 6px; }
  .app11.open::after, .app11.active::after { content: ''; position: absolute; left: 50%; bottom: 1px; width: 8px; height: 4px; margin-left: -4px; border-radius: 2px; background: #7d7d7a; }
  .app11.active { background: #f2f2f0; }
  .app11.active::after { width: 20px; margin-left: -10px; background: #0a78d4; }
  .app11.alert { background: #fde6e8; }
  .app11.alert::after { background: #c42b1c; }
  .count { position: absolute; right: 1px; top: 3px; width: 20px; height: 20px; border-radius: 10px; background: #0a78d4; color: #fff; font-size: 13px; line-height: 20px; }
  .face { position: absolute; right: 3px; top: 3px; width: 20px; height: 20px; border-radius: 10px; border: 1px solid #888; background: radial-gradient(circle at 50% 60%, #e0a287 0 5px, #c9ccd0 6px); }
  .tray { margin-left: auto; display: flex; align-items: center; padding-right: 25px; }
  .slot { width: 40px; height: 50px; }
  .lang { width: 57px; margin-right: 3px; flex-direction: column; }
  .mini { width: 30px; height: 50px; }
  .clock { width: 92px; flex-direction: column; align-items: flex-end; font-size: 15px; }
  .alerts { width: 20px; height: 20px; margin-left: 15px; border-radius: 10px; background: #0067c0; color: #fff; font-size: 12px; }
</style>
